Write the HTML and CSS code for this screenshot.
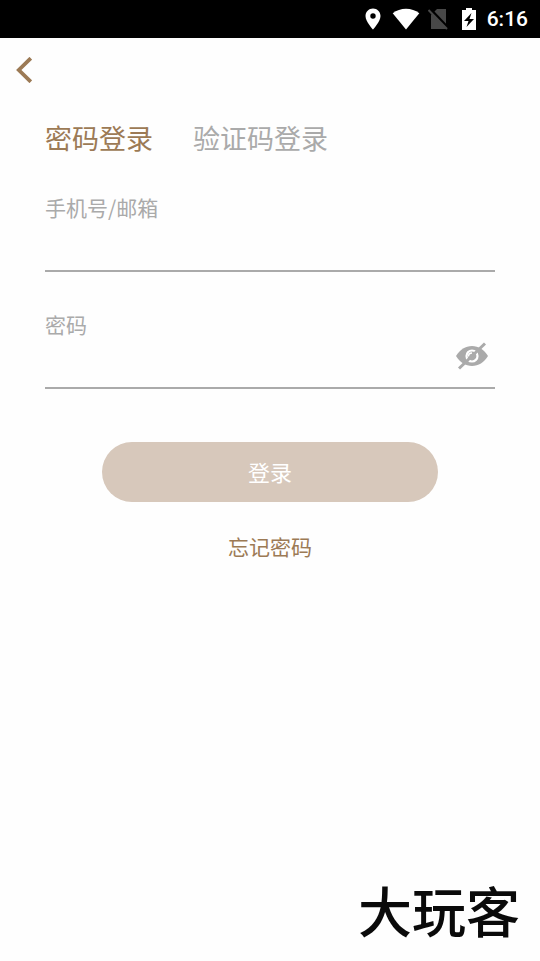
FILE: index.html
```html
<!DOCTYPE html>
<html lang="zh-CN">
<head>
<meta charset="utf-8">
<meta name="viewport" content="width=device-width, initial-scale=1">
<title>密码登录</title>
<link rel="stylesheet" href="styles.css">
</head>
<body>
<div class="status-bar">
  <div class="status-icons">
    <svg width="16" height="22" viewBox="0 0 16 22" aria-hidden="true"><path fill="#fff" fill-rule="evenodd" d="M8 0.5C3.800.5.5 3.800.5 8c0 5.500 7.500 13.500 7.500 13.500S15.500 13.500 15.500 8C15.500 3.800 12.200.5 8 .5zm0 4.800a2.700 2.700 0 1 1 0 5.400a2.700 2.700 0 0 1 0-5.400z"/></svg>
    <svg width="28" height="22" viewBox="0 0 28 22" aria-hidden="true"><path fill="#fff" d="M14 21.500L.7 5.200C4.500 2.200 9 .7 14 .7s9.500 1.500 13.300 4.500z"/></svg>
    <svg width="20" height="22" viewBox="0 0 20 22" aria-hidden="true"><path fill="#484848" d="M9 1h9v20H3V7z"/><path stroke="#000" stroke-width="3" d="M2 1l18 19"/><path stroke="#484848" stroke-width="2" d="M.5 2L19 21"/></svg>
    <svg width="16" height="22" viewBox="0 0 16 22" aria-hidden="true"><path fill="#fff" d="M5 0h6v2h4v20H1V2h4z"/><path fill="#000" d="M10.500 5L3 13h4.500l-2 6L13 11H8.500z"/></svg>
  </div>
  <span class="clock">6:16</span>
</div>
<header class="top-bar">
  <button class="back" type="button" aria-label="返回">
    <svg width="16" height="26" viewBox="0 0 16 26" aria-hidden="true"><path fill="none" stroke="#9c7a55" stroke-width="3.800" d="M14.800 1.200L2.800 13l12 11.800"/></svg>
  </button>
</header>
<main class="login">
  <nav class="tabs">
    <button class="tab tab-active" type="button">密码登录</button>
    <button class="tab" type="button">验证码登录</button>
  </nav>
  <form class="form">
    <div class="field">
      <label for="account">手机号/邮箱</label>
      <div class="entry"><input id="account" type="text"></div>
    </div>
    <div class="field">
      <label for="password">密码</label>
      <div class="entry">
        <input id="password" type="password">
        <button class="reveal" type="button" aria-label="显示密码">
          <svg width="34" height="28" viewBox="0 0 34 28" aria-hidden="true">
            <path fill="#aaa" d="M1 14C5 7.500 10.500 4 17 4s12 3.500 16 10c-4 6.500-9.500 10-16 10S5 20.500 1 14z"/>
            <circle cx="17" cy="14" r="5.500" fill="none" stroke="#fff" stroke-width="2.200"/>
            <path fill="none" stroke="#fff" stroke-width="1.500" d="M13.500 14.500c0-2 1.500-3.500 3.500-3.500"/>
            <path stroke="#aaa" stroke-width="3" d="M4 26.500L30 1.500"/>
          </svg>
        </button>
      </div>
    </div>
    <button class="submit" type="button">登录</button>
  </form>
  <a class="forgot" href="#">忘记密码</a>
</main>
<footer class="brand">大玩客</footer>
</body>
</html>
```
FILE: styles.css
```css
* {
  box-sizing: border-box;
}

body {
  margin: 0;
  min-height: 100vh;
  display: flex;
  flex-direction: column;
  background: #fefefe;
  color: #aaa;
  font-family: "Noto Sans CJK SC", sans-serif;
}

button,
input {
  margin: 0;
  padding: 0;
  border: 0;
  background: none;
  color: inherit;
  font: inherit;
}

svg {
  display: block;
}

.status-bar {
  display: flex;
  align-items: center;
  justify-content: flex-end;
  gap: 10px;
  height: 38px;
  padding-right: 12px;
  background: #000;
}

.status-icons {
  display: grid;
  grid-template-columns: 16px 25px 22px 16px;
  column-gap: 11px;
}

.clock {
  color: #fff;
  font: 500 21px/38px Roboto, sans-serif;
}

.top-bar {
  display: flex;
  align-items: center;
  height: 64px;
  padding: 0 16px;
}

.login {
  display: flex;
  flex-direction: column;
  padding: 16px 45px 0;
}

.tabs {
  display: flex;
  gap: 40px;
}

.tab {
  font-size: 27px;
  line-height: 40px;
}

.tab-active {
  color: #9c7a55;
}

.form {
  display: flex;
  flex-direction: column;
  gap: 38px;
  padding-top: 35px;
}

.field label {
  display: block;
  padding-bottom: 2px;
  font-size: 21px;
  line-height: 28px;
}

.entry {
  display: flex;
  height: 49px;
  padding-right: 6px;
  border-bottom: 2px solid #aaa;
}

.entry input {
  flex: 1;
  min-width: 0;
  outline: 0;
  color: #333;
  font-size: 21px;
}

.reveal {
  display: flex;
  align-items: flex-start;
  padding-top: 2px;
}

.submit {
  align-self: center;
  width: 336px;
  max-width: 100%;
  height: 60px;
  margin-top: 15px;
  padding-bottom: 2px;
  border-radius: 30px;
  background: #d7c8bb;
  color: #fff;
  font-size: 22px;
}

.forgot {
  align-self: center;
  margin-top: 30px;
  color: #9c7a55;
  font-size: 21px;
  line-height: 28px;
  text-decoration: none;
}

.brand {
  margin-top: auto;
  padding: 0 20px 23px;
  color: #0a0a0a;
  font-size: 54px;
  font-weight: 500;
  line-height: 56px;
  text-align: right;
}
```
